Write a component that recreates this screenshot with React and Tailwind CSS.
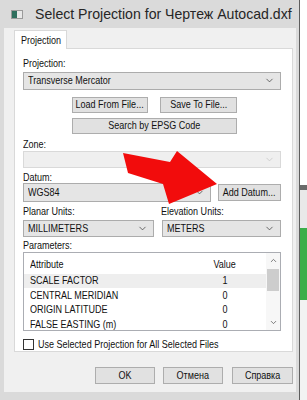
import React from 'react';
import { ChevronDown, ChevronUp } from 'lucide-react';

// The dialog font is a narrow sans; Liberation Sans squeezed horizontally stands in for it.
const T = ({ children, center }) => (
  <span
    className={`inline-block shrink-0 whitespace-nowrap scale-x-[0.82] ${center ? 'origin-center' : 'origin-left'}`}
  >
    {children}
  </span>
);

const Select = ({ value, className = '', disabled }) => (
  <div
    className={`flex items-center border pl-[4px] pr-[5px] ${
      disabled ? 'border-[#d9d9d9] bg-[#efefef]' : 'border-[#acacac] bg-[#e5e5e5]'
    } ${className}`}
  >
    <T>{value}</T>
    <ChevronDown
      size={11}
      strokeWidth={1.6}
      className={`ml-auto shrink-0 ${disabled ? 'text-[#c4c4c4]' : 'text-[#3c3c3c]'}`}
    />
  </div>
);

const Btn = ({ children, className = '' }) => (
  <div className={`flex items-center justify-center border border-[#adadad] bg-[#e1e1e1] ${className}`}>
    <T center>{children}</T>
  </div>
);

const rows = [
  ['SCALE FACTOR', '1'],
  ['CENTRAL MERIDIAN', '0'],
  ['ORIGIN LATITUDE', '0'],
  ['FALSE EASTING (m)', '0'],
];

const App = () => {
  return (
    <div className="relative flex h-[400px] w-[307px] overflow-hidden bg-white text-[11px] leading-[13px] text-[#111] font-['Liberation_Sans',Arial,sans-serif]">
      {/* window */}
      <div className="flex h-[400px] w-[300px] flex-col border-r border-[#5e5e5e] bg-[#dadada]">
        {/* title bar */}
        <div className="flex h-[28px] items-center pl-[11px] pr-[3px]">
          <svg width="12" height="9" viewBox="0 0 12 9" className="shrink-0">
            <rect x="0.5" y="0.5" width="11" height="8" fill="#e8e8e8" stroke="#9a9a9a" />
            <rect x="1" y="1" width="5" height="7" fill="#2f6f5e" />
          </svg>
          <span className="ml-[12px] inline-block origin-left scale-x-[0.94] whitespace-nowrap text-[15px] leading-[18px] text-[#262626]">
            Select Projection for Чертеж Autocad.dxf
          </span>
          <div className="ml-auto mb-[8px] flex h-[17px] w-[21px] shrink-0 items-center justify-center border border-[#8f8f8f] bg-[#e2e2e2]">
            <svg width="9" height="8" viewBox="0 0 9 8">
              <path d="M1 1 L8 7 M8 1 L1 7" stroke="#8a8a8a" strokeWidth="1.6" />
            </svg>
          </div>
        </div>

        {/* client area */}
        <div className="ml-[4px] flex h-[364px] w-[292px] flex-col bg-[#f0f0f0]">
          <div className="ml-[10px] mt-[2px] w-[279px]">
            <div className="flex">
              <div className="relative z-10 -mb-px flex h-[19px] w-[53px] items-center border border-b-0 border-[#d9d9d9] bg-white pl-[6px]">
                <T>Projection</T>
              </div>
            </div>
            {/* tab page */}
            <div className="flex h-[304px] flex-col border border-[#d9d9d9] bg-white pl-[8px]">
              <div className="mt-[8px]"><T>Projection:</T></div>
              <Select value="Transverse Mercator" className="mt-[2px] h-[18px] w-[258px]" />

              <div className="ml-[49px] mt-[7px] flex gap-[12px]">
                <Btn className="h-[16px] w-[76px]">Load From File...</Btn>
                <Btn className="h-[16px] w-[77px]">Save To File...</Btn>
              </div>
              <Btn className="ml-[49px] mt-[5px] h-[16px] w-[165px]">Search by EPSG Code</Btn>

              <div className="mt-[4px]"><T>Zone:</T></div>
              <Select disabled value="" className="h-[17px] w-[258px]" />

              <div className="mt-[3px] leading-[12px]"><T>Datum:</T></div>
              <div className="flex h-[19px] items-center gap-[7px]">
                <Select value="WGS84" className="h-[19px] w-[188px]" />
                <Btn className="h-[17px] w-[63px]">Add Datum...</Btn>
              </div>

              <div className="mt-[3px] flex">
                <div className="w-[138px]"><T>Planar Units:</T></div>
                <div><T>Elevation Units:</T></div>
              </div>
              <div className="mt-[2px] flex gap-[8px]">
                <Select value="MILLIMETERS" className="h-[17px] w-[131px]" />
                <Select value="METERS" className="h-[17px] w-[119px]" />
              </div>

              <div className="mt-[2px]"><T>Parameters:</T></div>
              <div className="flex h-[80px] w-[258px] overflow-hidden border border-[#abadb3] bg-white">
                <div className="flex w-[242px] flex-col">
                  <div className="flex h-[21px] shrink-0 items-center pt-[2px]">
                    <div className="w-[176px] pl-[6px]"><T>Attribute</T></div>
                    <div className="flex w-[50px] justify-center"><T center>Value</T></div>
                  </div>
                  {rows.map(([name, val], i) => (
                    <div
                      key={name}
                      className={`flex h-[14.5px] shrink-0 items-center ${i === 0 ? 'bg-[#eeeeee]' : ''}`}
                    >
                      <div className="w-[176px] pl-[6px]"><T>{name}</T></div>
                      <div className="flex w-[50px] justify-center"><T center>{val}</T></div>
                    </div>
                  ))}
                </div>
                {/* scrollbar */}
                <div className="flex w-[14px] flex-col bg-[#f7f7f7]">
                  <div className="flex h-[16px] items-center justify-center">
                    <ChevronUp size={9} strokeWidth={2} className="text-[#555]" />
                  </div>
                  <div className="mx-[1px] h-[22px] bg-[#cdcdcd]" />
                  <div className="flex-1" />
                  <div className="flex h-[16px] items-center justify-center">
                    <ChevronDown size={9} strokeWidth={2} className="text-[#555]" />
                  </div>
                </div>
              </div>

              <div className="mt-[7px] flex items-center">
                <div className="h-[11px] w-[11px] shrink-0 border border-[#333] bg-white" />
                <span className="ml-[4px]"><T>Use Selected Projection for All Selected Files</T></span>
              </div>
            </div>
          </div>

          {/* dialog buttons */}
          <div className="ml-[91px] mt-[15px] flex">
            <Btn className="h-[17px] w-[60px]">OK</Btn>
            <Btn className="ml-[8px] h-[17px] w-[60px]">Отмена</Btn>
            <Btn className="ml-[9px] h-[17px] w-[61px]">Справка</Btn>
          </div>
        </div>
      </div>

      {/* background behind the window */}
      <div className="flex w-[7px] flex-col bg-[#f4f4f4]">
        <div className="h-[185px] bg-white" />
        <div className="h-[5px] bg-[#6a6a6a]" />
        <div className="h-[38px] bg-[#e9e9e9]" />
        <div className="h-[72px] bg-[#3cae4a]" />
        <div className="flex-1 bg-[#f2f2f2]" />
      </div>

      {/* red annotation arrow */}
      <svg className="absolute left-0 top-0" width="307" height="400" viewBox="0 0 307 400">
        <polygon
          points="123,153 170,162 177,151 217,184 169,204 163,184 128,173"
          fill="#f20c0c"
        />
      </svg>
    </div>
  );
};

export default App;
